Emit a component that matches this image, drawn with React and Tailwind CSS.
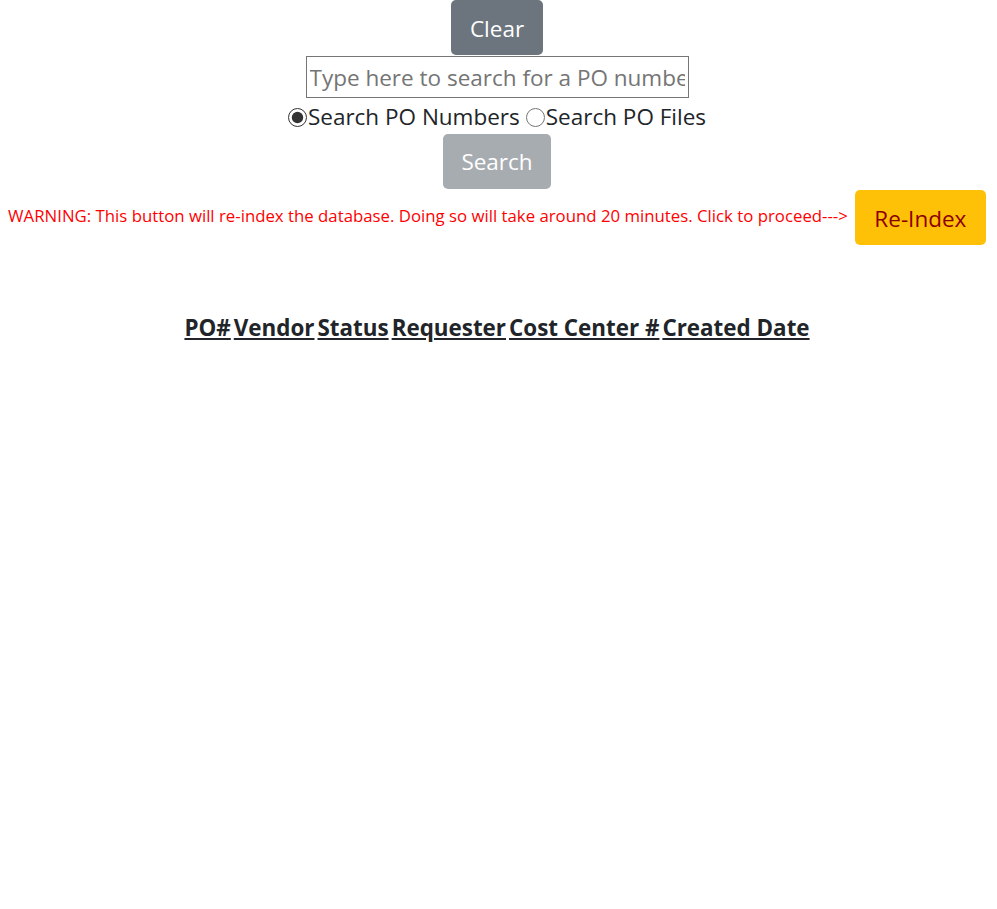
import { useState } from "react"

export default function App() {
  const [mode, setMode] = useState("numbers")
  const [query, setQuery] = useState("")

  return (
    <main className="min-h-screen bg-white font-['Open_Sans',sans-serif] text-[#212529]">
      <div className="flex flex-col items-center pr-[3px]">
        {/* Clear */}
        <button
          onClick={() => setQuery("")}
          className="flex h-[55px] w-[92px] items-center justify-center rounded-[5px] bg-[#6c757d] pt-[3px] text-[22.5px] text-white"
        >
          Clear
        </button>

        {/* Search input */}
        <input
          type="text"
          value={query}
          onChange={(e) => setQuery(e.target.value)}
          placeholder="Type here to search for a PO number"
          className="mt-px h-[42px] w-[383px] border border-[#767676] px-[3px] text-[22.5px] text-[#212529] placeholder-[#757575] outline-none"
        />

        {/* Mode radios */}
        <div className="mt-[6px] flex h-[26px] items-center text-[22.5px] leading-none">
          <label className="flex items-center">
            <input
              type="radio"
              name="mode"
              checked={mode === "numbers"}
              onChange={() => setMode("numbers")}
              className="m-0 h-[19px] w-[19px] accent-[#333]"
            />
            <span className="ml-px">Search PO Numbers</span>
          </label>
          <label className="ml-[6px] flex items-center">
            <input
              type="radio"
              name="mode"
              checked={mode === "files"}
              onChange={() => setMode("files")}
              className="m-0 h-[19px] w-[19px] accent-[#333]"
            />
            <span className="ml-px">Search PO Files</span>
          </label>
        </div>

        {/* Search */}
        <button
          disabled
          className="mt-[4px] flex h-[55px] w-[108px] items-center justify-center rounded-[5px] bg-[#a7acb1] pt-px text-[22.5px] text-white"
        >
          Search
        </button>

        {/* Re-index warning */}
        <div className="mt-px flex items-center gap-[7px]">
          <span className="pb-[3px] text-[16.8px] text-[#ff0000]">
            WARNING: This button will re-index the database. Doing so will take around 20 minutes. Click to proceed---&gt;
          </span>
          <button className="flex h-[55px] w-[131px] items-center justify-center rounded-[5px] bg-[#ffc107] pt-[3px] text-[22.5px] text-[#8b0000]">
            Re-Index
          </button>
        </div>

        {/* Results table */}
        <table className="mt-[63px] border-separate border-spacing-[3px]">
          <thead>
            <tr>
              {["PO#", "Vendor", "Status", "Requester", "Cost Center #", "Created Date"].map((h) => (
                <th key={h} className="p-0 text-[22.4px] font-bold underline">
                  {h}
                </th>
              ))}
            </tr>
          </thead>
          <tbody />
        </table>
      </div>
    </main>
  )
}
